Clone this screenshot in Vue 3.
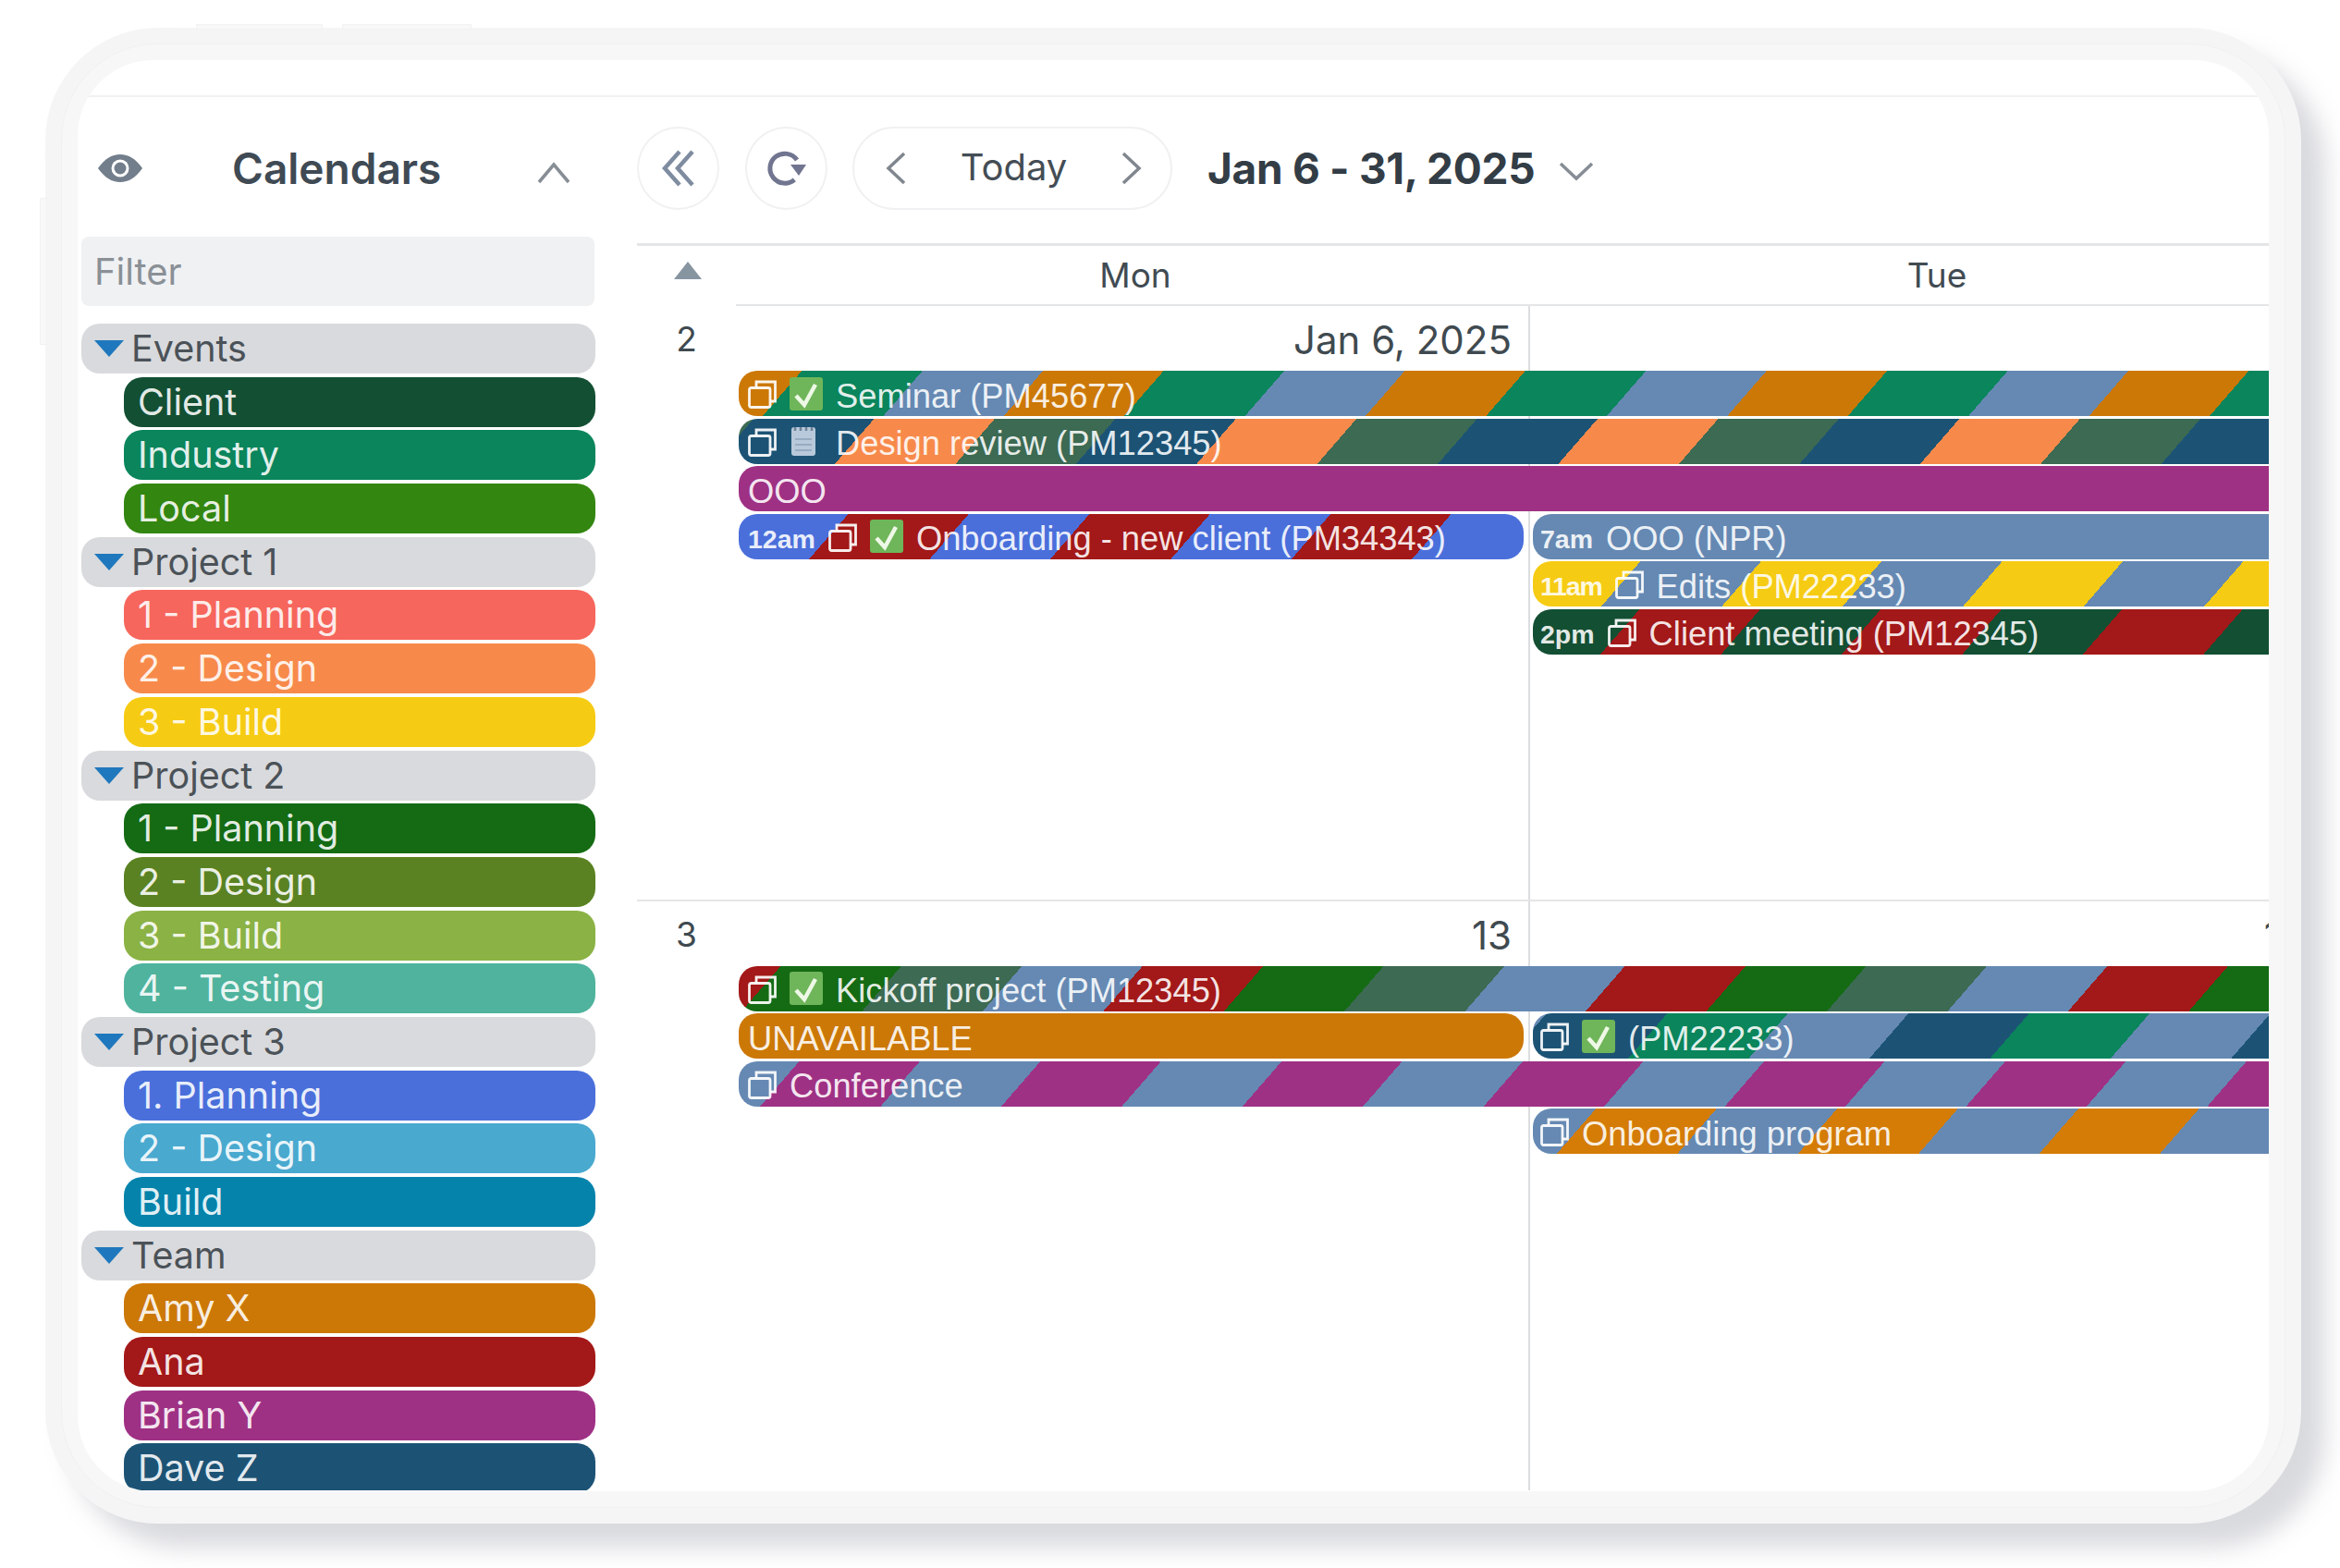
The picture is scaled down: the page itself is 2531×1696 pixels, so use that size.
<script setup>
const c = {
  orange: '#cc7807', green: '#0a855c', slate: '#6589b3', navy: '#1c5375', peach: '#f78a4b',
  moss: '#3c6a53', purple: '#9f3184', blue: '#4a6fdb', red: '#a31818', yellow: '#f6cb13',
  pine: '#134f33', forest: '#146b14', amber: '#d47c06',
}

const groups = [
  { name: 'Events', items: [['Client', c.pine], ['Industry', c.green], ['Local', '#338610']] },
  { name: 'Project 1', items: [['1 - Planning', '#f6665c'], ['2 - Design', c.peach], ['3 - Build', c.yellow]] },
  { name: 'Project 2', items: [['1 - Planning', c.forest], ['2 - Design', '#5a8222'], ['3 - Build', '#8bb244'], ['4 - Testing', '#4fb39d']] },
  { name: 'Project 3', items: [['1. Planning', c.blue], ['2 - Design', '#49a9cf'], ['Build', '#0583ab']] },
  { name: 'Team', items: [['Amy X', c.orange], ['Ana', c.red], ['Brian Y', c.purple], ['Dave Z', c.navy]] },
]

// span: all = runs past the right edge, mon / tue = one day only
const weeks = [
  {
    num: 2, mon: 'Jan 6, 2025', tue: '',
    bars: [
      { row: 2, span: 'all', title: 'Seminar (PM45677)', colors: [c.orange, c.green, c.slate], start: -62, copy: true, icon: 'check' },
      { row: 3, span: 'all', title: 'Design review (PM12345)', colors: [c.navy, c.peach, c.moss], start: 16, copy: true, icon: 'note' },
      { row: 4, span: 'all', title: 'OOO', colors: [c.purple] },
      { row: 5, span: 'mon', time: '12am', title: 'Onboarding - new client (PM34343)', colors: [c.blue, c.red], start: -12, copy: true, icon: 'check' },
      { row: 5, span: 'tue', time: '7am', title: 'OOO (NPR)', colors: [c.slate] },
      { row: 6, span: 'tue', time: '11am', title: 'Edits (PM22233)', colors: [c.yellow, c.slate], start: -14, copy: true },
      { row: 7, span: 'tue', time: '2pm', title: 'Client meeting (PM12345)', colors: [c.pine, c.red], start: -15, copy: true },
    ],
  },
  {
    num: 3, mon: '13', tue: '14',
    bars: [
      { row: 2, span: 'all', title: 'Kickoff project (PM12345)', colors: [c.red, c.forest, c.moss, c.slate], start: -85, copy: true, icon: 'check' },
      { row: 3, span: 'mon', title: 'UNAVAILABLE', colors: [c.orange] },
      { row: 3, span: 'tue', title: '(PM22233)', colors: [c.navy, c.green, c.slate], start: 15, copy: true, icon: 'check' },
      { row: 4, span: 'all', title: 'Conference', colors: [c.slate, c.purple], start: -65, copy: true },
      { row: 5, span: 'tue', title: 'Onboarding program', colors: [c.slate, c.amber], start: -62, copy: true },
    ],
  },
]

// slanted bands, 130px wide measured along the top edge of the bar
const stripes = (colors, start = 0) => {
  if (colors.length === 1) return colors[0]
  const k = 0.755
  const stops = colors.map((col, i) => {
    const a = (start + i * 130.4) * k
    return `${col} ${a.toFixed(1)}px ${(a + 130.4 * k).toFixed(1)}px`
  })
  return `repeating-linear-gradient(131deg, ${stops.join(', ')})`
}
</script>

<template>
  <div class="page">
    <div class="device">
      <span class="hw hw-a"></span>
      <span class="hw hw-b"></span>
      <span class="hw hw-c"></span>
      <div class="bezel">
        <div class="screen">
          <div class="statusbar"></div>
          <div class="body">
            <aside class="sidebar">
              <div class="side-head">
                <svg class="eye" viewBox="0 0 50 32">
                  <path d="M1 16C8 6 16 1 25 1s17 5 24 15c-7 10-15 15-24 15S8 26 1 16z" fill="#727e8b" />
                  <circle cx="25" cy="16" r="9.5" fill="#fff" />
                  <circle cx="25" cy="16" r="6.5" fill="#727e8b" />
                </svg>
                <h2>Calendars</h2>
                <svg class="chev-up" viewBox="0 0 36 24">
                  <path d="M2 22L18 3l16 19" fill="none" stroke="#868d95" stroke-width="3.5" />
                </svg>
              </div>
              <input class="filter" type="text" placeholder="Filter" />
              <div class="cal-list">
                <template v-for="g in groups" :key="g.name">
                  <div class="group">
                    <svg class="tri" viewBox="0 0 32 18"><path d="M0 0h32L16 18z" fill="#1f78bd" /></svg>
                    {{ g.name }}
                  </div>
                  <div
                    v-for="item in g.items"
                    :key="g.name + item[0]"
                    class="item"
                    :style="{ background: item[1] }"
                  >{{ item[0] }}</div>
                </template>
              </div>
            </aside>

            <main class="calendar">
              <div class="toolbar">
                <button class="round">
                  <svg width="36" height="40" viewBox="0 0 36 40" fill="none" stroke="#7f8ca0" stroke-width="4.5">
                    <path d="M19 2L3 20l16 18" />
                    <path d="M33 2L17 20l16 18" />
                  </svg>
                </button>
                <button class="round">
                  <svg width="44" height="44" viewBox="0 0 44 44" fill="none" stroke="#71758f" stroke-width="5">
                    <path d="M30.3 34.3A16 16 0 1 1 33 13" />
                    <path d="M26 18h17l-8 12z" fill="#71758f" stroke="none" />
                  </svg>
                </button>
                <div class="pager">
                  <svg width="22" height="36" viewBox="0 0 22 36" fill="none" stroke="#80868e" stroke-width="3.5">
                    <path d="M20 2L3 18l17 16" />
                  </svg>
                  <span>Today</span>
                  <svg width="22" height="36" viewBox="0 0 22 36" fill="none" stroke="#80868e" stroke-width="3.5">
                    <path d="M2 2l17 16L2 34" />
                  </svg>
                </div>
                <div class="range">Jan 6 - 31, 2025</div>
                <svg class="chev-down" viewBox="0 0 38 22">
                  <path d="M2 3l17 16L36 3" fill="none" stroke="#868d95" stroke-width="3.5" />
                </svg>
              </div>

              <div class="grid">
                <div class="grid-head">
                  <div class="gutter"><svg width="30" height="19" viewBox="0 0 30 19"><path d="M15 0l15 19H0z" fill="#8795a1" /></svg></div>
                  <div class="dow dow-mon">Mon</div>
                  <div class="dow dow-tue">Tue</div>
                </div>

                <section v-for="w in weeks" :key="w.num" class="week">
                  <div class="week-num">{{ w.num }}</div>
                  <div class="day-label">{{ w.mon }}</div>
                  <div class="day-label">{{ w.tue }}</div>
                  <div
                    v-for="b in w.bars"
                    :key="b.title"
                    class="bar"
                    :class="'span-' + b.span"
                    :style="{ gridRow: b.row, background: stripes(b.colors, b.start) }"
                  >
                    <b v-if="b.time" class="time" :class="{ tight: b.time === '11am' }">{{ b.time }}</b>
                    <svg v-if="b.copy" class="copy" viewBox="0 0 31 31" fill="none" stroke="currentColor" stroke-width="2.8">
                      <rect x="1.5" y="8.5" width="22.5" height="21" rx="2" />
                      <path d="M9 8V2h20.5v21H24.500" />
                    </svg>
                    <svg v-if="b.icon === 'check'" class="mark" viewBox="0 0 36 36">
                      <rect width="36" height="36" rx="3" fill="#6fb55a" />
                      <path d="M7 20l9 10L28 8" fill="none" stroke="#eef8e6" stroke-width="4.500" />
                    </svg>
                    <svg v-if="b.icon === 'note'" class="note" viewBox="0 0 26 32">
                      <rect y="1" width="26" height="31" rx="3" fill="#b8c9db" />
                      <path d="M4 1v4M10 1v4M16 1v4M22 1v4" stroke="#6f8297" stroke-width="2.500" />
                      <path d="M4 14h18M4 20h18M4 26h18" stroke="#97abc1" stroke-width="2" />
                    </svg>
                    <span class="title">{{ b.title }}</span>
                  </div>
                </section>
              </div>
            </main>
          </div>
        </div>
      </div>
    </div>
  </div>
</template>

<style scoped>
.page {
  width: 2531px;
  height: 1696px;
  padding: 30px 0 0 49px;
  box-sizing: border-box;
  overflow: hidden;
  background: #fff;
  font-family: Inter, "Liberation Sans", sans-serif;
}
.device {
  position: relative;
  width: 2440px;
  height: 1618px;
  box-sizing: border-box;
  padding: 17px;
  background: #f5f5f6;
  border-radius: 122px;
  box-shadow: 26px 26px 26px rgba(170, 172, 182, 0.45);
}
.hw {
  position: absolute;
  background: #f8f8f9;
  border: 1px solid #f2f2f3;
}
.hw-a { left: 163px; top: -4px; width: 135px; height: 4px; }
.hw-b { left: 321px; top: -4px; width: 138px; height: 4px; }
.hw-c { left: -6px; top: 184px; width: 6px; height: 157px; }
.bezel {
  height: 100%;
  box-sizing: border-box;
  padding: 17px;
  background: #f7f7f8;
  border: 1px solid #f1f1f3;
  border-radius: 104px;
}
.screen {
  height: 100%;
  background: #fff;
  border-radius: 82px;
  overflow: hidden;
}
.statusbar {
  height: 38px;
  border-bottom: 2px solid #f2f2f4;
}
.body {
  display: flex;
  gap: 45px;
  height: 1507px;
  padding-left: 4px;
}

/* sidebar */
.sidebar {
  flex: 0 0 556px;
  padding-top: 32px;
  overflow: hidden;
}
.side-head {
  display: flex;
  align-items: center;
  height: 90px;
  padding-left: 17px;
}
.eye {
  width: 50px;
  height: 32px;
}
h2 {
  margin: 0 0 0 96px;
  font-size: 46px;
  font-weight: 600;
  color: #3f4a54;
}
.chev-up {
  width: 36px;
  height: 24px;
  margin: 10px 0 0 104px;
}
.filter {
  display: block;
  width: 555px;
  height: 75px;
  margin-top: 29px;
  padding: 0 0 0 14px;
  box-sizing: border-box;
  border: 0;
  border-radius: 8px;
  background: #f0f1f3;
  font: 40px Inter, "Liberation Sans", sans-serif;
}
.filter::placeholder {
  color: #8a9096;
  opacity: 1;
}
.cal-list {
  display: flex;
  flex-direction: column;
  gap: 3.7px;
  margin-top: 19px;
}
.group, .item {
  flex: 0 0 54px;
  display: flex;
  align-items: center;
  font-size: 39.500px;
  border-radius: 20px;
}
.group {
  padding-left: 14px;
  gap: 8px;
  background: #d9dadd;
  color: #4b5258;
}
.tri {
  width: 32px;
  height: 18px;
}
.item {
  margin-left: 46px;
  padding-left: 15px;
  color: rgba(255, 255, 255, 0.9);
}

/* calendar */
.calendar {
  flex: 1;
  min-width: 0;
  padding-top: 32px;
  overflow: hidden;
}
.toolbar {
  display: flex;
  align-items: center;
  height: 90px;
  gap: 28px;
}
.round {
  width: 89px;
  height: 90px;
  padding: 0;
  display: flex;
  align-items: center;
  justify-content: center;
  background: #fff;
  border: 2px solid #f1f1f3;
  border-radius: 50%;
}
.pager {
  width: 346px;
  height: 90px;
  box-sizing: border-box;
  padding: 0 31px 0 34px;
  margin-left: -1px;
  display: flex;
  align-items: center;
  justify-content: space-between;
  border: 2px solid #f1f1f3;
  border-radius: 45px;
  font-size: 40px;
  color: #444d55;
}
.pager span {
  margin-top: -3px;
}
.range {
  margin-left: 10px;
  font-size: 46px;
  font-weight: 700;
  letter-spacing: -0.3px;
  color: #333d46;
}
.chev-down {
  width: 38px;
  height: 22px;
  margin: 6px 0 0 -2px;
}
.grid {
  margin-top: 36px;
  border-top: 3px solid #e4e5e7;
  height: 1349px;
  overflow: hidden;
}
.grid-head {
  display: grid;
  grid-template-columns: 107px 858px 858px;
  height: 65px;
}
.gutter {
  padding: 17px 0 0 40px;
}
.dow {
  border-bottom: 2px solid #e4e5e7;
  text-align: center;
  font-size: 37px;
  line-height: 63px;
  color: #414b52;
}
.dow-mon {
  padding-left: 6px;
}
.dow-tue {
  padding-left: 24px;
}
.week {
  display: grid;
  grid-template-columns: 107px 858px 858px;
  grid-template-rows: 70px repeat(6, 51.600px);
  height: 641.500px;
  border-bottom: 2px solid #e4e5e7;
  /* line between monday and tuesday */
  background: linear-gradient(#dcdde0, #dcdde0) 964px 0 / 2px 100% no-repeat;
}
.week:last-child {
  border-bottom: 0;
}
.week-num {
  padding-top: 13px;
  text-align: center;
  font-size: 37px;
  color: #3f4a50;
  line-height: 46px;
}
.day-label {
  padding: 14px 19px 0 0;
  text-align: right;
  font-size: 42px;
  line-height: 46px;
  color: #3f4a50;
}
.bar {
  display: flex;
  align-items: center;
  gap: 14px;
  height: 49px;
  padding-left: 10px;
  margin-left: 3px;
  border-radius: 20px;
  font-family: "Liberation Sans", Arial, sans-serif;
  font-size: 36.300px;
  color: rgba(255, 255, 255, 0.9);
  white-space: nowrap;
  overflow: hidden;
}
.title {
  margin-top: 6px;
}
.span-all {
  grid-column: 2 / -1;
  border-radius: 20px 0 0 20px;
}
.span-mon {
  grid-column: 2;
  margin-right: 6px;
}
.span-tue {
  grid-column: 3;
  border-radius: 20px 0 0 20px;
  margin-left: 4px;
  padding-left: 8px;
}
.time {
  font-size: 28.500px;
  margin-top: 6px;
}
.tight {
  letter-spacing: -1.2px;
}
.copy {
  flex: none;
  width: 31px;
  height: 31px;
  margin-top: 2px;
  color: rgba(255, 255, 255, 0.92);
}
.mark {
  flex: none;
  width: 36px;
  height: 36px;
}
.note {
  flex: none;
  width: 26px;
  height: 32px;
  margin: 0 8px 0 2px;
}
</style>

<style>
html, body {
  margin: 0;
  background: #fff;
  overflow: hidden;
}
</style>
